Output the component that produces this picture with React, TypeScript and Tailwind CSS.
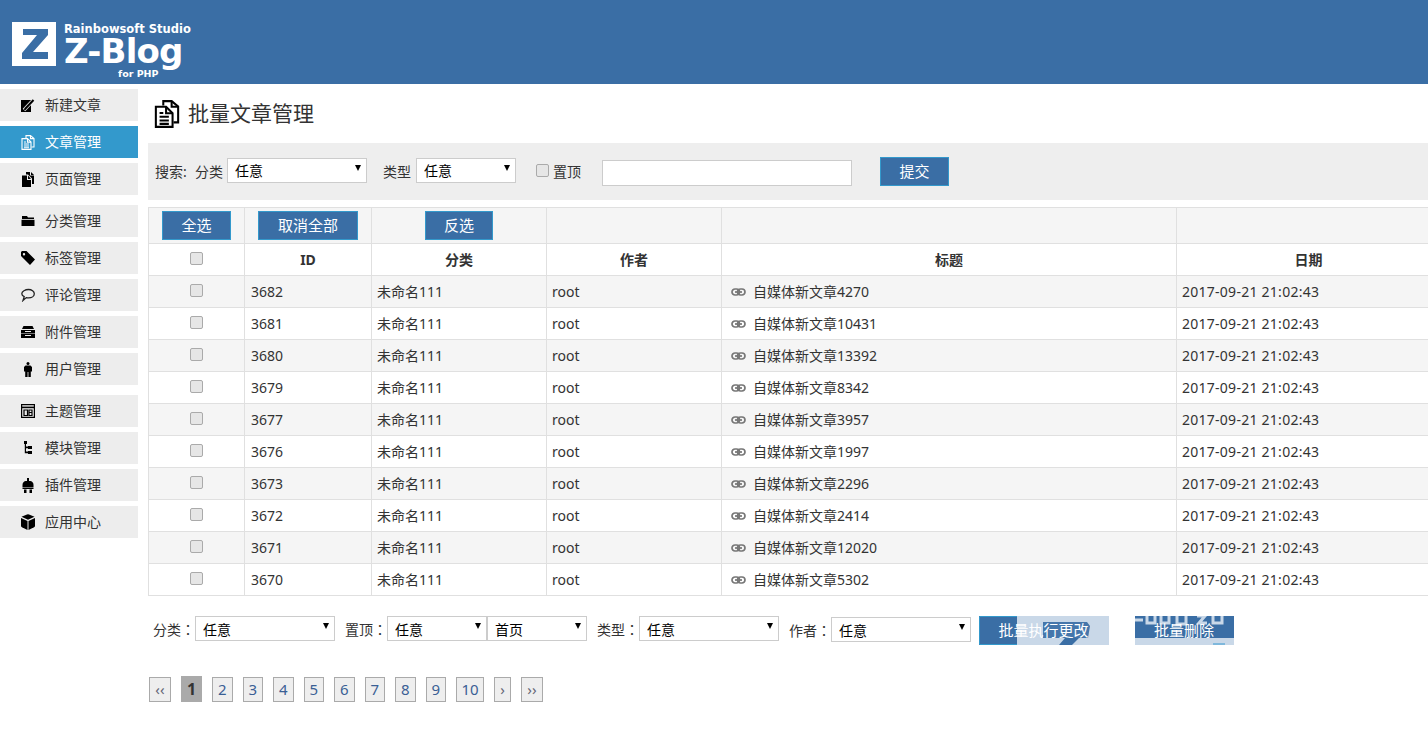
import React from "react";

const font = { fontFamily: '"Noto Sans", "Noto Sans CJK SC", sans-serif' };

type IconProps = { className?: string };

const IconNew = () => (
  <svg width="14" height="13" viewBox="0 0 14 13" fill="none">
    <rect x="0" y="1" width="10" height="12" fill="#000" />
    <path d="M3 11L11 2.500" stroke="#ededed" strokeWidth="3.500" />
    <path d="M4 10l8.500-9" stroke="#000" strokeWidth="2" />
    <path d="M4.500 9.500l-1 1.500" stroke="#000" strokeWidth="1.500" />
  </svg>
);
const IconDocs = ({ className = "text-black", w = 14, h = 15 }: IconProps & { w?: number; h?: number }) => (
  <svg width={w} height={h} viewBox="0 0 14 15" preserveAspectRatio="none" className={className} fill="none" stroke="currentColor" strokeWidth="1.100">
    <path d="M5 3V.6h4.500L13 3.500V12h-2.500" />
    <path d="M9.500.6v3H13" />
    <path d="M1 3.600h5.500l3.500 3.500v7.300H1z" />
    <path d="M6.500 3.600v3.500H10" />
    <path d="M3 7h2M3 9h5M3 11h5M3 12.800h5" />
  </svg>
);
const IconPage = () => (
  <svg width="14" height="15" viewBox="0 0 14 15" fill="currentColor" className="text-black">
    <path d="M5 0h4v3.500h4V12h-2V6.500L7 2.500H5z" />
    <path d="M10 0l3 3h-3z" />
    <path d="M1 3.500h5V8h4v7H1z" />
    <path d="M7 3.500L10 7H7z" />
  </svg>
);
const IconFolder = () => (
  <svg width="14" height="12" viewBox="0 0 14 12" fill="currentColor" className="text-black">
    <path d="M1 1h5l1 1.500h6V4H1z" />
    <path d="M.500 4.800h13V11h-13z" />
  </svg>
);
const IconTag = () => (
  <svg width="14" height="14" viewBox="0 0 14 14" fill="currentColor" className="text-black">
    <path fillRule="evenodd" d="M1 0h4.500l8.500 8.500-5 5.500L0 5V1zM3 2a1.200 1.200 0 100 2.400A1.200 1.200 0 003 2z" />
  </svg>
);
const IconComment = () => (
  <svg width="14" height="14" viewBox="0 0 14 14" fill="none" stroke="currentColor" strokeWidth="1.300" className="text-[#222]">
    <path d="M7.500 1.500c3.200 0 5.800 1.800 5.800 4.200S10.700 9.900 7.500 9.900c-.8 0-1.500-.1-2.200-.3L2 12.500l1.200-3.800C1.800 8 .8 7 .8 5.700.8 3.300 4.300 1.500 7.500 1.500z" />
  </svg>
);
const IconArchive = () => (
  <svg width="14" height="12" viewBox="0 0 14 12" fill="currentColor" className="text-black">
    <path fillRule="evenodd" d="M2.500 0h9L13 3H1zM0 4h14v3.500H0zM4 5v1h6V5zM0 8h14v4H0zM4 9v1h6V9z" />
  </svg>
);
const IconUser = () => (
  <svg width="8" height="15" viewBox="0 0 8 15" fill="currentColor" className="text-black">
    <circle cx="4" cy="1.500" r="1.500" />
    <path d="M1.500 3.500h5L8 5v4.500H6.800V15H4.400v-5h-.8v5H1.200V9.500H0V5z" />
  </svg>
);
const IconTheme = () => (
  <svg width="14" height="14" viewBox="0 0 14 14" fill="none" stroke="currentColor" strokeWidth="1.200" className="text-black">
    <path d="M.6.6h12.800v12.800H.6z" />
    <path d="M1 3.400h12" strokeWidth="1.600" />
    <path d="M3 6h3.500v5.500H3zM8 6h3v2.500H8zM8 8.500v3h3v-3" />
  </svg>
);
const IconTree = () => (
  <svg width="8" height="14" viewBox="0 0 8 14" fill="currentColor" className="text-black">
    <path d="M0 0h3v3H2v2.500h2V5h4v3H4v-.800H2V10.500h2V10h4v3H4v-.800H.800V3H0z" />
  </svg>
);
const IconPlug = () => (
  <svg width="12" height="15" viewBox="0 0 12 15" fill="currentColor" className="text-black">
    <path d="M5 0h2v3h1.500C10.500 3.500 11.500 5 11.500 7v2H.500V7C.500 5 1.500 3.500 3.500 3H5z" />
    <path d="M.500 9.500h11V11H.500zM2 11.500h2.500V15H2zM7.500 11.500H10V15H7.500z" />
  </svg>
);
const IconBox = () => (
  <svg width="14" height="16" viewBox="0 0 14 16" fill="currentColor" className="text-black">
    <path d="M6 .4q1-.4 2 0l5.500 2.300L7 5.700.5 2.700z" />
    <path d="M0 4l6.500 3v9L1 13.300q-1-.5-1-1.500z" />
    <path d="M14 4L7.500 7v9l5.500-2.700q1-.5 1-1.500z" />
  </svg>
);
const IconLink = () => (
  <svg width="15" height="8" viewBox="0 0 15 8" fill="none" stroke="#777" strokeWidth="1.700" className="shrink-0">
    <rect x="1" y="1" width="7.500" height="6" rx="3" />
    <rect x="6.500" y="1" width="7.500" height="6" rx="3" />
    <path d="M4 4h7" />
  </svg>
);

const Colon = () => <span className="font-['Noto_Sans_CJK_TC']">：</span>;

const Logo = () => (
  <div className="flex h-[84px] items-start bg-[#3a6ea5] pl-[12px] pt-[22px]">
    <svg width="44" height="44" viewBox="0 0 44 44" className="shrink-0">
      <rect width="44" height="44" fill="#fff" />
      <path d="M11 7h25v6L21 30h15v7H10v-6l15-18H11z" fill="#3a6ea5" />
    </svg>
    <div className="ml-[8px] flex w-[128px] flex-col text-white" style={{ fontFamily: '"DejaVu Sans", sans-serif' }}>
      <span className="h-[14px] whitespace-nowrap text-[11.500px] font-bold leading-[14px]">Rainbowsoft Studio</span>
      <span className="h-[32px] whitespace-nowrap text-[34px] font-bold leading-[30px] tracking-[-0.8px]">Z-Blog</span>
      <span className="ml-[54px] whitespace-nowrap text-[9.500px] font-bold leading-[12px]">for PHP</span>
    </div>
  </div>
);

const SideItem = ({ icon, label, active }: { icon: React.ReactNode; label: string; active?: boolean }) => (
  <div className={`mb-[5px] flex h-[32px] items-center ${active ? "bg-[#3399cc] text-white" : "bg-[#ededed] text-[#333]"}`}>
    <span className="flex w-[45px] shrink-0 items-center justify-center pl-[17px] pr-[7px]">{icon}</span>
    <span className="pb-[2px] text-[14px]">{label}</span>
  </div>
);

const Btn = ({ label, className = "" }: { label: string; className?: string }) => (
  <button className={`flex h-[29px] shrink-0 items-center justify-center border border-[#3399cc] bg-[#3a6ea5] text-[15px] text-white ${className}`}>
    {label}
  </button>
);

const Select = ({ value, className = "", low }: { value: string; className?: string; low?: boolean }) => (
  <div className={`relative h-[25px] shrink-0 ${className}`}>
    <select className={`h-full w-full appearance-none border border-[#ccc] bg-white pl-[7px] text-[14px] text-black outline-none ${low ? "pt-[2px]" : ""}`}>
      <option>{value}</option>
    </select>
    <span className="pointer-events-none absolute right-[6px] top-[7px] h-0 w-0 border-x-[3.500px] border-t-[6px] border-x-transparent border-t-black" />
  </div>
);

const Check = ({ className = "" }: { className?: string }) => (
  <input type="checkbox" className={`h-[13px] w-[13px] appearance-none rounded-[2px] border border-[#aaa] bg-[#e6e6e6] ${className}`} />
);

const rows: [string, string][] = [
  ["3682", "4270"], ["3681", "10431"], ["3680", "13392"], ["3679", "8342"], ["3677", "3957"],
  ["3676", "1997"], ["3673", "2296"], ["3672", "2414"], ["3671", "12020"], ["3670", "5302"],
];

const td = "border border-[#e0e0e0] px-[5px] text-[14px] text-[#333] align-middle";
const th = "border border-[#e0e0e0] text-center text-[14px] font-bold text-[#333] align-middle";

const pages = [
  { t: "‹‹", w: "w-[22px]", c: "text-[#667]" },
  { t: "1", w: "w-[21px]", on: true },
  { t: "2", w: "w-[20.500px]" }, { t: "3", w: "w-[20.500px]" }, { t: "4", w: "w-[20.500px]" }, { t: "5", w: "w-[20.500px]" },
  { t: "6", w: "w-[20.500px]" }, { t: "7", w: "w-[20.500px]" }, { t: "8", w: "w-[20.500px]" }, { t: "9", w: "w-[20.500px]" },
  { t: "10", w: "w-[28px]" },
  { t: "›", w: "w-[17px]", c: "text-[#667]" },
  { t: "››", w: "w-[22px]", c: "text-[#667]" },
];

export default function App() {
  return (
    <div className="h-[736px] w-[1428px] overflow-hidden bg-white" style={font}>
      <Logo />
      <div className="flex">
        <aside className="w-[138px] shrink-0 pt-[5px]">
          <SideItem icon={<IconNew />} label="新建文章" />
          <SideItem active icon={<IconDocs className="text-white" />} label="文章管理" />
          <SideItem icon={<IconPage />} label="页面管理" />
          <div className="h-[5px]" />
          <SideItem icon={<IconFolder />} label="分类管理" />
          <SideItem icon={<IconTag />} label="标签管理" />
          <SideItem icon={<IconComment />} label="评论管理" />
          <SideItem icon={<IconArchive />} label="附件管理" />
          <SideItem icon={<IconUser />} label="用户管理" />
          <div className="h-[5px]" />
          <SideItem icon={<IconTheme />} label="主题管理" />
          <SideItem icon={<IconTree />} label="模块管理" />
          <SideItem icon={<IconPlug />} label="插件管理" />
          <SideItem icon={<IconBox />} label="应用中心" />
        </aside>

        <main className="ml-[10px] w-[1280px] shrink-0">
          <div className="flex h-[59px] items-center pl-[6px]">
            <IconDocs w={26} h={28} className="text-black" />
            <h1 className="ml-[8px] text-[21px] font-normal text-[#333]">批量文章管理</h1>
          </div>

          <div className="flex h-[57px] items-center bg-[#eee] pl-[7px] text-[14px] text-[#333]">
            <span className="w-[40px] shrink-0">搜索:</span>
            <span className="w-[32px] shrink-0">分类</span>
            <Select value="任意" className="-mt-[2px] w-[140px]" />
            <span className="ml-[16px] w-[33px] shrink-0">类型</span>
            <Select value="任意" className="-mt-[2px] w-[100px]" />
            <Check className="ml-[20px] -mt-[2px]" />
            <span className="ml-[4px] w-[29px] shrink-0">置顶</span>
            <input className="ml-[20px] mt-[2px] h-[26px] w-[250px] border border-[#ccc] bg-white outline-none" />
            <Btn label="提交" className="ml-[28px] w-[69px]" />
          </div>

          <table className="mt-[7px] table-fixed border-collapse" style={{ width: 1292 }}>
            <colgroup>
              <col className="w-[96px]" />
              <col className="w-[127px]" />
              <col className="w-[175px]" />
              <col className="w-[175px]" />
              <col className="w-[455px]" />
              <col className="w-[264px]" />
            </colgroup>
            <thead>
              <tr className="h-[36px] bg-[#f5f5f5]">
                <td className="border border-[#e0e0e0] pl-[13px]"><Btn label="全选" className="w-[69px]" /></td>
                <td className="border border-[#e0e0e0] pl-[13px]"><Btn label="取消全部" className="w-[100px]" /></td>
                <td className="border border-[#e0e0e0] pl-[53px]"><Btn label="反选" className="w-[68px]" /></td>
                <td className="border border-[#e0e0e0]" />
                <td className="border border-[#e0e0e0]" />
                <td className="border border-[#e0e0e0]" />
              </tr>
              <tr className="h-[32px]">
                <th className={th}><Check className="block mx-auto -mt-[3px]" /></th>
                <th className={th}>ID</th>
                <th className={th}>分类</th>
                <th className={th}>作者</th>
                <th className={th}>标题</th>
                <th className={th}>日期</th>
              </tr>
            </thead>
            <tbody>
              {rows.map(([id, n], i) => (
                <tr key={id} className={`h-[32px] ${i % 2 === 0 ? "bg-[#f5f5f5]" : "bg-white"}`}>
                  <td className={`${td} text-center`}><Check className="block mx-auto -mt-[3px]" /></td>
                  <td className={`${td} pl-[6px]`}>{id}</td>
                  <td className={td}>未命名111</td>
                  <td className={td}>root</td>
                  <td className={td}>
                    <div className="flex items-center pl-[4px]">
                      <IconLink />
                      <span className="ml-[7px]">自媒体新文章{n}</span>
                    </div>
                  </td>
                  <td className={`${td} tracking-[0.26px]`}>2017-09-21 21:02:43</td>
                </tr>
              ))}
            </tbody>
          </table>

          <div className="mt-[20px] flex h-[29px] items-start pl-[5px] text-[14px] text-[#333]">
            <span className="w-[42px] shrink-0 leading-[27px]">分类<Colon /></span>
            <Select low value="任意" className="w-[140px]" />
            <span className="ml-[10px] w-[42px] shrink-0 leading-[27px]">置顶<Colon /></span>
            <Select low value="任意" className="w-[100px]" />
            <Select low value="首页" className="w-[100px]" />
            <span className="ml-[10px] w-[42px] shrink-0 leading-[27px]">类型<Colon /></span>
            <Select low value="任意" className="w-[140px]" />
            <span className="ml-[10px] w-[42px] shrink-0 leading-[29px]">作者<Colon /></span>
            <Select low value="任意" className="mt-[1px] w-[140px]" />
            <div className="relative ml-[8px] h-[29px] w-[130px] shrink-0 overflow-hidden bg-[#c9d8e8]">
              <svg width="130" height="29" viewBox="0 0 130 29" className="absolute left-0 top-0">
                <rect width="38" height="29" fill="#3a6ea5" />
                <path d="M38 .5H.5v28H38" stroke="#3399cc" fill="none" />
                <path d="M64 6h44l3 4-2 12H64z" fill="#3a6ea5" opacity=".92" />
                <path d="M86 22h14l-7 7H80z" fill="#3a6ea5" />
              </svg>
              <span className="absolute inset-0 flex items-center justify-center pr-[1px] text-[15px] text-white">批量执行更改</span>
            </div>
            <div className="relative ml-[26px] h-[29px] w-[99px] shrink-0 overflow-hidden bg-[#3a6ea5]">
              <svg width="99" height="29" viewBox="0 0 99 29" className="absolute left-0 top-0">
                <rect y="22" width="99" height="7" fill="#c9d8e8" />
                <path d="M0 4h8M12 0v7h8V0M26 0v7h8V0M42 0v8h9V0M62 0h8l-6 7h8M78 0v7h9V0" stroke="#c9d8e8" strokeWidth="3" fill="none" />
                <rect x="78" y="27" width="12" height="2" fill="#7fb8dc" />
              </svg>
              <span className="absolute inset-0 flex items-center justify-center pr-[1px] text-[15px] text-white">批量删除</span>
            </div>
          </div>

          <div className="ml-[1px] mt-[31px] flex items-end gap-[10px]">
            {pages.map((p) => (
              <span
                key={p.t}
                className={`flex shrink-0 items-center justify-center border border-[#aaa] ${p.w} ${
                  p.on
                    ? "h-[26px] bg-[#aaa] font-bold text-[#333]"
                    : `h-[25px] bg-[#eee] text-[15px] ${p.c ?? "text-[#3a5f95]"}`
                }`}
              >
                {p.t}
              </span>
            ))}
          </div>
        </main>
      </div>
    </div>
  );
}
